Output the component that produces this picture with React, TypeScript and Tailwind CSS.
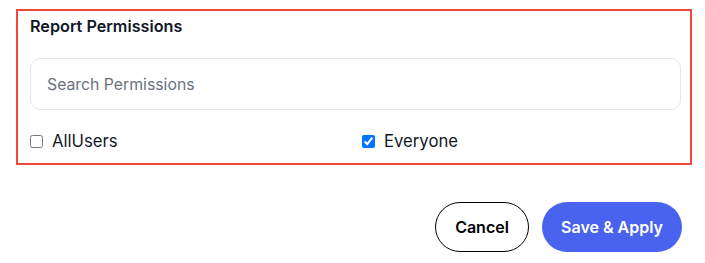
import { useState } from 'react';

export default function App() {
  const [query, setQuery] = useState('');
  const [allUsers, setAllUsers] = useState(false);
  const [everyone, setEveryone] = useState(true);

  return (
    <div className="w-[705px] h-[263px] bg-white pt-[9px] font-['Inter',sans-serif] text-[#111827]">
      <div className="ml-4 w-[676px] border-2 border-[#f2463d] pl-3 pr-[9px] pt-[3px] pb-[10px]">
        <div className="text-[16.2px] leading-6 font-semibold">Report Permissions</div>
        <input
          type="text"
          value={query}
          onChange={(e) => setQuery(e.target.value)}
          placeholder="Search Permissions"
          className="mt-5 h-[52px] w-full rounded-[10px] border border-[#e5e7eb] bg-white px-4 text-[15.8px] text-gray-800 outline-none placeholder:text-[#6b7280]"
        />
        <div className="mt-[19px] grid grid-cols-2 gap-x-[13px]">
          <label className="flex items-center gap-[9px] text-[16.7px] leading-6">
            <input type="checkbox" checked={allUsers} onChange={(e) => setAllUsers(e.target.checked)} />
            AllUsers
          </label>
          <label className="flex items-center gap-[9px] text-[16.7px] leading-6">
            <input type="checkbox" checked={everyone} onChange={(e) => setEveryone(e.target.checked)} />
            Everyone
          </label>
        </div>
      </div>

      <div className="mt-[37px] mr-[23px] flex justify-end gap-[13px]">
        <button className="h-[50px] w-[94px] rounded-full border border-black bg-white text-base font-semibold text-black">
          Cancel
        </button>
        <button className="h-[50px] w-[140px] rounded-full bg-[#4a63ee] text-base font-semibold text-white">
          Save &amp; Apply
        </button>
      </div>
    </div>
  );
}
